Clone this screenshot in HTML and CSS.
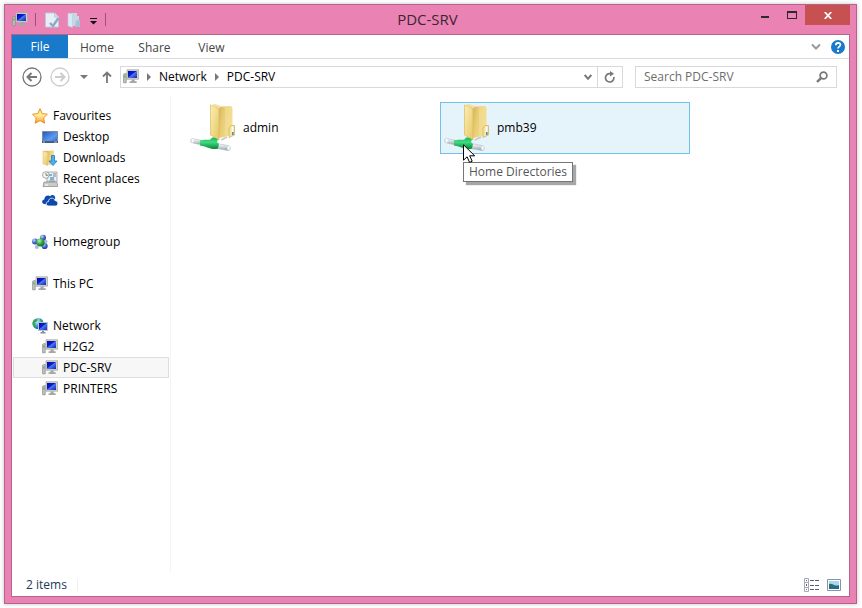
FILE: index.html
```html
<!DOCTYPE html>
<html lang="en-GB">
<head>
<meta charset="utf-8">
<title>PDC-SRV</title>
<link rel="stylesheet" href="styles.css">
</head>
<body>
<svg class="defs" aria-hidden="true">
  <defs>
    <linearGradient id="g-screen" x1="0" y1="0" x2="1" y2="1"><stop offset="0" stop-color="#0008a8"/><stop offset=".45" stop-color="#0c20d0"/><stop offset=".5" stop-color="#4f78f0"/><stop offset="1" stop-color="#1024b8"/></linearGradient>
    <linearGradient id="g-folder" x1="0" y1="0" x2="1" y2="1"><stop offset="0" stop-color="#fbeeb4"/><stop offset="1" stop-color="#e6c766"/></linearGradient>
    <linearGradient id="g-inner" x1="0" y1="0" x2="1" y2=".3"><stop offset="0" stop-color="#c9a447"/><stop offset=".5" stop-color="#e6cb72"/><stop offset="1" stop-color="#f4df94"/></linearGradient>
    <linearGradient id="g-star" x1="0" y1="0" x2="0" y2="1"><stop offset="0" stop-color="#ffd65a"/><stop offset=".45" stop-color="#fff0a0"/><stop offset="1" stop-color="#ff9a1c"/></linearGradient>
    <linearGradient id="g-desk" x1="0" y1="0" x2="1" y2="1"><stop offset="0" stop-color="#2254b8"/><stop offset=".6" stop-color="#5e9af0"/><stop offset="1" stop-color="#2c62c8"/></linearGradient>
    <linearGradient id="g-pipe" x1="0" y1="0" x2="0" y2="1"><stop offset="0" stop-color="#fff"/><stop offset=".45" stop-color="#d3dbdf"/><stop offset="1" stop-color="#8f9a9f"/></linearGradient>
    <linearGradient id="g-green" x1="0" y1="0" x2="0" y2="1"><stop offset="0" stop-color="#12b552"/><stop offset=".4" stop-color="#41dc80"/><stop offset="1" stop-color="#048236"/></linearGradient>
    <radialGradient id="g-blue" cx=".35" cy=".3" r=".7"><stop offset="0" stop-color="#c4d8ff"/><stop offset=".6" stop-color="#4468c8"/><stop offset="1" stop-color="#2440a0"/></radialGradient>
    <radialGradient id="g-ball" cx=".35" cy=".3" r=".7"><stop offset="0" stop-color="#b4f0a8"/><stop offset=".6" stop-color="#2ca63a"/><stop offset="1" stop-color="#0c7424"/></radialGradient>
    <radialGradient id="g-globe" cx=".4" cy=".3" r=".7"><stop offset="0" stop-color="#c8f0ff"/><stop offset=".7" stop-color="#2c8cd8"/><stop offset="1" stop-color="#1460a8"/></radialGradient>
  </defs>
  <symbol id="i-pc" viewBox="0 0 16 16">
    <path d="M4 .8h11.6v9.4H4z" fill="#d3d3cb" stroke="#a8a8a0" stroke-width=".8"/>
    <path d="M5 2h9v7H5z" fill="url(#g-screen)"/>
    <path d="M8.500 10.500h3.200v1.800h2v1.600H6.600v-1.600h1.900z" fill="#a7a7a1"/>
    <path d="M.6 5.200l2.600-.8v9.400H.6z" fill="#c2c5c2" stroke="#858884" stroke-width=".7"/>
    <path d="M1.200 6.400h1.400v2H1.200z" fill="#55bb4c"/>
  </symbol>
  <symbol id="i-folder-net" viewBox="0 0 48 48">
    <path d="M25 3l16-1 1.500 2v27L29 34z" fill="url(#g-inner)"/>
    <path d="M35 2.500l6-.5v28l-6 2z" fill="#f3de94" opacity=".6"/>
    <path d="M41 21.500h3.500V31L39 33.500V24z" fill="#f5e4a1" stroke="#d3b55c" stroke-width=".8"/>
    <path d="M42.500 22.500V30" stroke="#fff" stroke-width="1.500"/>
    <path d="M42 28h1.600v3H42z" fill="#438fd2"/>
    <path d="M20.500 1L29 4.500V36l-8.500-5z" fill="url(#g-folder)" stroke="#deb95b" stroke-width=".7"/>
    <path d="M21 1l4-1 7 2.500-3 2z" fill="#f4dea0"/>
    <path d="M31 36l6-3" stroke="#c7c9c6" stroke-width="1.500"/>
    <path d="M2 34.500l10 2v4.500l-9-2c-3-.5-3-4-1-4.500z" fill="url(#g-pipe)" stroke="#aebdc3" stroke-width=".6"/>
    <path d="M27 39.500l11 2c3 .6 3 5.200 0 5l-11-2z" fill="url(#g-pipe)" stroke="#aebdc3" stroke-width=".6"/>
    <path d="M10 36.500c5-1.400 7-.5 10-.8l2-2c2-.6 4 .2 6 1.800l-1 2.500 2 2-1 4.500c-6 2-9-1.500-18-3z" fill="url(#g-green)"/>
    <ellipse cx="2.600" cy="36.800" rx="1" ry="2" fill="#fff"/>
    <ellipse cx="38.600" cy="44" rx="1.500" ry="2.200" fill="#fff" stroke="#bbc3c7" stroke-width=".5"/>
  </symbol>
</svg>

<div class="window">
  <header class="titlebar">
    <div class="quick">
      <svg class="icon" aria-hidden="true"><use href="#i-pc"/></svg>
      <span class="sep"></span>
      <button type="button" aria-label="Properties"><svg class="icon" viewBox="0 0 16 16"><path d="M1.500 1h9l4 4v10h-13z" fill="#e8eef5" stroke="#bccbd9"/><path d="M10.500 1v4h4" fill="#cfdce8" stroke="#bccbd9"/><path d="M6 11l3 3 5.500-8" fill="none" stroke="#8ca7c7" stroke-width="2.400"/></svg></button>
      <button type="button" aria-label="New folder"><svg class="icon" viewBox="0 0 16 16"><path d="M4 1h7v3h2v10H4z" fill="#c5d6e4"/><path d="M2 1l4.500 1.500v13L2 14z" fill="#dbe8f2" stroke="#bacddd" stroke-width=".6"/><path d="M12 8h2v7h-5l1-6z" fill="#aac0d5"/></svg></button>
      <button type="button" class="more" aria-label="Customise Quick Access Toolbar"><svg width="7" height="7" viewBox="0 0 7 7"><path d="M0 0h7v1H0zM0 3h7L3.500 6.500z" fill="#111"/></svg></button>
      <span class="sep"></span>
    </div>
    <h1>PDC-SRV</h1>
    <div class="controls">
      <button type="button" aria-label="Minimise"><svg width="10" height="10" viewBox="0 0 10 10"><path d="M1 6h8v2H1z" fill="#2a2a2a"/></svg></button>
      <button type="button" aria-label="Maximise"><svg width="10" height="8" viewBox="0 0 10 8"><path d="M0 0h10v8H0zM1 2v5h8V2z" fill="#2a2a2a" fill-rule="evenodd"/></svg></button>
      <button type="button" class="close" aria-label="Close"><svg width="8" height="7" viewBox="0 0 8 7"><path d="M.7 0l6.600 7M7.300 0L.7 7" stroke="#fff" stroke-width="1.700"/></svg></button>
    </div>
  </header>

  <div class="client">
    <nav class="ribbon" aria-label="Ribbon">
      <button type="button" class="file">File</button>
      <button type="button">Home</button>
      <button type="button">Share</button>
      <button type="button">View</button>
      <span class="fill"></span>
      <button type="button" class="plain" aria-label="Expand the Ribbon"><svg width="10" height="8" viewBox="0 0 10 8"><path d="M1 1.500l4 4 4-4" fill="none" stroke="#999" stroke-width="2"/></svg></button>
      <button type="button" class="plain" aria-label="Help"><svg width="14" height="14" viewBox="0 0 14 14"><circle cx="7" cy="7" r="7" fill="#1979ca"/><path d="M4.800 5.200c0-3.200 4.600-3.100 4.600-.4C9.400 6.700 7 6.600 7 8.600" fill="none" stroke="#fff" stroke-width="1.700"/><path d="M6 10h2v2H6z" fill="#fff"/></svg></button>
    </nav>

    <div class="address-row">
      <button type="button" class="plain back" aria-label="Back"><svg width="20" height="20" viewBox="0 0 20 20"><circle cx="10" cy="10" r="9" fill="none" stroke="#777" stroke-width="1.300"/><path d="M15 10H6M9.500 6L5.500 10l4 4" fill="none" stroke="#777" stroke-width="2"/></svg></button>
      <button type="button" class="plain forward" aria-label="Forward"><svg width="20" height="20" viewBox="0 0 20 20"><circle cx="10" cy="10" r="9" fill="none" stroke="#ccc" stroke-width="1.300"/><path d="M5 10h9M10.500 6l4 4-4 4" fill="none" stroke="#ccc" stroke-width="2"/></svg></button>
      <button type="button" class="plain recent" aria-label="Recent locations"><svg width="8" height="4" viewBox="0 0 8 4"><path d="M0 0h8L4 4z" fill="#777"/></svg></button>
      <button type="button" class="plain up" aria-label="Up"><svg width="10" height="12" viewBox="0 0 10 12"><path d="M5 12V2M1 5.500l4-4 4 4" fill="none" stroke="#777" stroke-width="1.800"/></svg></button>
      <div class="address">
        <svg class="icon" aria-hidden="true"><use href="#i-pc"/></svg>
        <svg class="crumb-arrow" viewBox="0 0 4 8"><path d="M0 0l4 4-4 4z" fill="#777"/></svg>
        <a href="#">Network</a>
        <svg class="crumb-arrow" viewBox="0 0 4 8"><path d="M0 0l4 4-4 4z" fill="#777"/></svg>
        <a href="#">PDC-SRV</a>
        <span class="fill"></span>
        <button type="button" class="plain history" aria-label="Previous locations"><svg width="8" height="7" viewBox="0 0 8 7"><path d="M.7 1L4 4.800 7.300 1" fill="none" stroke="#777" stroke-width="2"/></svg></button>
        <button type="button" class="plain refresh" aria-label="Refresh"><svg width="12" height="12" viewBox="0 0 12 12"><path d="M7 2.600H5.200a4.200 4.200 0 1 0 4.600 3.400" fill="none" stroke="#777" stroke-width="1.700"/><path d="M6 0l4 2.700L6 5.500z" fill="#777"/></svg></button>
      </div>
      <label class="search">
        <input type="text" placeholder="Search PDC-SRV" aria-label="Search PDC-SRV">
        <svg width="12" height="12" viewBox="0 0 12 12"><circle cx="7.500" cy="4.500" r="3.400" fill="none" stroke="#777" stroke-width="1.700"/><path d="M5.200 6.800L1 11" stroke="#777" stroke-width="2.400"/></svg>
      </label>
    </div>

    <div class="body">
      <nav class="tree" aria-label="Navigation pane">
        <ul>
          <li><a href="#"><svg class="icon" viewBox="0 0 16 16"><path d="M8 .6l2.200 5 5.200.6-3.800 3.700 1 5.300L8 12.600l-4.800 2.600 1-5.300L.5 6.200l5.300-.6z" fill="url(#g-star)" stroke="#e58a23" stroke-width=".9"/></svg>Favourites</a>
            <ul>
              <li><a href="#"><svg class="icon" viewBox="0 0 16 16"><path d="M.5 2.500h15v11H.5z" fill="url(#g-desk)" stroke="#7d8b9c"/><path d="M0 12h16v2H0z" fill="#4a5d78"/><path d="M1 12.500h2v1H1zM12 12.500h3v1h-3z" fill="#aec6df"/></svg>Desktop</a></li>
              <li><a href="#"><svg class="icon" viewBox="0 0 16 16"><path d="M2 1l10-.5V14L7 15z" fill="url(#g-inner)"/><path d="M1 .8l5 1.700v13l-5-1.700z" fill="url(#g-folder)" stroke="#d8b75b" stroke-width=".5"/><path d="M9.500 5.500h3v5.500H15l-4 4.600L7 11h2.500z" fill="#4db1ef" stroke="#2179bd" stroke-width=".8"/></svg>Downloads</a></li>
              <li><a href="#"><svg class="icon" viewBox="0 0 16 16"><path d="M5 1h10v10H5z" fill="#e9edef" stroke="#999" stroke-width=".8"/><path d="M7 3h3v2H7zM8 6h4v3H8z" fill="#73b7dc"/><path d="M11 3h3M11 5h3M7 10h6" stroke="#888"/><path d="M2 11h12l1.500 1.500v3H1z" fill="#cacac6" stroke="#888" stroke-width=".7"/><path d="M3 14h3" stroke="#fff"/><circle cx="3.800" cy="4" r="3.300" fill="#f5f5f2" stroke="#969696" stroke-width=".8"/><path d="M4 2v2.300h2" fill="none" stroke="#666" stroke-width=".8"/></svg>Recent places</a></li>
              <li><a href="#"><svg class="icon" viewBox="0 0 16 16"><path d="M2.500 12C-.8 11.600-.4 7.700 2.300 7.500 2.400 4 6 2.400 8.200 4.200 10 1.900 13.600 3.500 13.200 6.500L7 13z" fill="#0c48ae"/><path d="M6.800 14c-3.500-.2-3.200-4.300-.3-4.500C6.600 5.500 12 4.900 12.900 8.500c3.300 0 4.400 4.800.7 5.500z" fill="#0c48ae" stroke="#fff" stroke-width=".8"/></svg>SkyDrive</a></li>
            </ul>
          </li>
          <li><a href="#"><svg class="icon" viewBox="0 0 16 16"><circle cx="11" cy="3.800" r="3" fill="url(#g-blue)"/><circle cx="3" cy="7.500" r="3" fill="url(#g-blue)"/><circle cx="12.600" cy="12" r="3.100" fill="url(#g-blue)"/><circle cx="4.800" cy="13" r="2" fill="#a5bbe6"/><circle cx="13.800" cy="7.500" r="1.700" fill="#a5bbe6"/><circle cx="8.500" cy="8.500" r="4.100" fill="url(#g-ball)"/></svg>Homegroup</a></li>
          <li><a href="#"><svg class="icon" aria-hidden="true"><use href="#i-pc"/></svg>This PC</a></li>
          <li><a href="#"><svg class="icon" viewBox="0 0 16 16"><circle cx="6" cy="5.500" r="5.500" fill="url(#g-globe)"/><path d="M2 2c2-1.600 4-1 3.500.5S2.500 4 3 6s1.500 2 .5 4C.5 8.500-.5 4.500 2 2zM8 .6c2 .5 3.200 2 3.200 3.600H9z" fill="#37a847"/><path d="M6.500 4.500h9v8h-9z" fill="url(#g-screen)" stroke="#bcc3ca"/><path d="M10 13h2v1h1.500v1.500h-5V14H10z" fill="#858d96"/></svg>Network</a>
            <ul>
              <li><a href="#"><svg class="icon" aria-hidden="true"><use href="#i-pc"/></svg>H2G2</a></li>
              <li><a href="#" class="selected" aria-current="page"><svg class="icon" aria-hidden="true"><use href="#i-pc"/></svg>PDC-SRV</a></li>
              <li><a href="#"><svg class="icon" aria-hidden="true"><use href="#i-pc"/></svg>PRINTERS</a></li>
            </ul>
          </li>
        </ul>
      </nav>
      <main class="files">
        <a href="#" class="tile"><svg class="big" aria-hidden="true"><use href="#i-folder-net"/></svg>admin</a>
        <a href="#" class="tile hover"><svg class="big" aria-hidden="true"><use href="#i-folder-net"/></svg>pmb39
          <svg class="cursor" width="13" height="20" viewBox="0 0 13 20"><path d="M.5.800v15.400l3.600-3.400 2.500 5.600 2.600-1.200-2.500-5.400h5z" fill="#fff" stroke="#000"/></svg>
          <span class="tooltip" role="tooltip">Home Directories</span>
        </a>
      </main>
    </div>

    <footer class="status">
      <span class="count">2 items</span>
      <span class="fill"></span>
      <button type="button" class="plain" aria-label="Details view"><svg width="16" height="14" viewBox="0 0 16 14"><path d="M.5.500h4v13h-4z" fill="#fff" stroke="#9fabba"/><path d="M0 4.500h5M0 9.500h5" stroke="#9fabba"/><path d="M2 2h1v1H2zM2 11h1v1H2z" fill="#3c6da8"/><path d="M2 6h1v2H2z" fill="#c33"/><path d="M6 2.500h4M11 2.500h4M6 7.500h4M11 7.500h4M6 11.500h4M11 11.500h4" stroke="#56616f"/></svg></button>
      <button type="button" class="plain" aria-label="Large icons view"><svg width="14" height="12" viewBox="0 0 14 12"><path d="M.5.500h13v11H.5z" fill="#fff" stroke="#8495a8"/><path d="M2 2h10v8H2z" fill="#a9d6f5"/><path d="M2 5c4-1 5 3 10 1v4H2z" fill="#2c7453"/><path d="M2 8.500c4-1 6 0 10-1V10H2z" fill="#2363aa"/></svg></button>
    </footer>
  </div>
</div>
</body>
</html>
```
FILE: styles.css
```css
* { box-sizing: border-box; }

body {
  margin: 0;
  min-height: 100vh;
  padding: 4px 5px 4px 4px;
  display: flex;
  background: #fff;
  color: #000;
  font: 12px/20px "Open Sans", "Noto Sans", sans-serif;
}

button, input { font: inherit; color: inherit; }
button {
  border: 0;
  padding: 0;
  background: none;
  display: flex;
  align-items: center;
  justify-content: center;
}
a { color: inherit; text-decoration: none; }
ul { list-style: none; margin: 0; padding: 0; }
svg { display: block; flex: none; }

.defs { position: absolute; width: 0; height: 0; }
.icon { width: 16px; height: 16px; }
.fill { flex: 1; }

.window {
  flex: 1;
  display: flex;
  flex-direction: column;
  border: 1px solid #b5628c;
  padding: 0 6px 6px;
  background: #ea82b4;
  box-shadow: 0 0 4px rgba(0, 0, 0, .25);
}

.titlebar {
  height: 29px;
  display: grid;
  grid-template-columns: 1fr auto 1fr;
}
.titlebar h1 {
  margin: 0;
  padding-right: 6px;
  font-size: 15px;
  font-weight: 400;
  line-height: 29px;
  color: #3a2631;
}
.quick { display: flex; align-items: center; gap: 6px; padding-left: 1px; }
.quick .more { width: 10px; height: 16px; padding-top: 3px; }
.sep { width: 1px; height: 13px; margin: 0 2px 0 1px; background: #a35078; }
.controls { display: flex; justify-content: flex-end; align-items: flex-start; }
.controls button { width: 27px; height: 20px; }
.controls .close { width: 45px; background: #c75050; }

.client {
  flex: 1;
  display: flex;
  flex-direction: column;
  border: 1px solid #b5628c;
  background: #fff;
}

.ribbon {
  display: flex;
  height: 24px;
  border-bottom: 1px solid #dadbdc;
  padding-right: 4px;
  color: #444;
}
.ribbon button { min-width: 57px; padding: 3px 12px 0; }
.ribbon .file { width: 56px; min-width: 0; padding: 0; background: #1979ca; color: #fff; }
.ribbon .plain { min-width: 0; padding: 0; margin-left: 10px; }

.address-row {
  display: flex;
  align-items: center;
  padding: 7px 12px 7px 10px;
}
.forward { margin-left: 8px; }
.recent { margin-left: 10px; }
.up { margin: 0 8px 0 14px; }
.address {
  flex: 1;
  display: flex;
  align-items: center;
  height: 22px;
  border: 1px solid #d9d9d9;
  padding-left: 2px;
}
.crumb-arrow { width: 4px; height: 8px; margin: 0 8px; }
.history { width: 18px; }
.refresh { width: 25px; height: 20px; border-left: 1px solid #d9d9d9; }
.search {
  flex: 0 0 202px;
  display: flex;
  align-items: center;
  height: 22px;
  margin-left: 12px;
  padding: 0 8px;
  border: 1px solid #d9d9d9;
}
.search input {
  flex: 1;
  width: 0;
  min-width: 0;
  border: 0;
  padding: 0;
  outline: 0;
  background: none;
}
.search input::placeholder { color: #6d6d6d; opacity: 1; }

.body { flex: 1; display: flex; }
.tree {
  width: 159px;
  padding: 10px 1px 0;
  border-right: 1px solid #f5f5f5;
}
.tree > ul { display: grid; gap: 21px; }
.tree a {
  display: flex;
  align-items: center;
  gap: 5px;
  height: 21px;
  padding-left: 18px;
  border: 1px solid transparent;
}
.tree ul ul a { padding-left: 28px; }
.tree .selected { border-color: #dedede; background: #f7f7f7; }

.files {
  flex: 1;
  display: grid;
  grid-template-columns: repeat(auto-fill, 250px);
  align-content: start;
  gap: 4px;
  padding: 7px 0 0 15px;
}
.tile {
  position: relative;
  display: flex;
  gap: 5px;
  align-items: center;
  height: 52px;
  padding: 0 3px;
  border: 1px solid transparent;
}
.tile.hover { border-color: #70c0e7; background: #e5f3fb; }
.big { width: 48px; height: 48px; }
.cursor { position: absolute; left: 22px; top: 41px; z-index: 2; }
.tooltip {
  position: absolute;
  left: 22px;
  top: 59px;
  height: 20px;
  padding: 0 5px;
  border: 1px solid #767676;
  background: #fff;
  color: #575757;
  line-height: 18px;
  white-space: nowrap;
  box-shadow: 3px 3px 1px rgba(0, 0, 0, .35);
}

.status {
  display: flex;
  align-items: center;
  gap: 7px;
  height: 23px;
  padding: 0 8px 0 14px;
  color: #1e395b;
}
.count { padding-right: 10px; line-height: 12px; border-right: 1px solid #eee; }
```
